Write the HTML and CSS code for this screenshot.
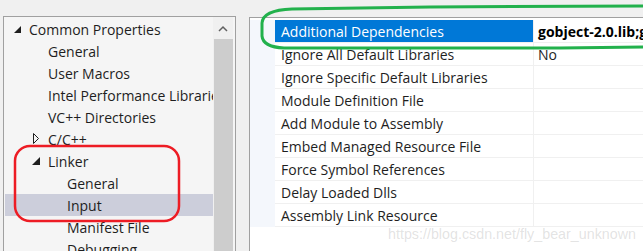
FILE: index.html
```html
<!DOCTYPE html>
<html lang="en">
<head>
    <meta charset="UTF-8">
    <meta name="viewport" content="width=device-width, initial-scale=1.0">
    <title>Linker Input - Property Pages</title>
    <link rel="stylesheet" href="styles.css">
</head>
<body>
    <div class="layout">
        <!-- Left: configuration tree -->
        <div class="tree-panel">
            <div class="tree">
                <div class="tree-row level-0">
                    <span class="twisty"><svg width="16" height="22"><polygon points="1,15 8,15 8,8" fill="#1e1e1e"/></svg></span>
                    <span class="label">Common Properties</span>
                </div>
                <div class="tree-row level-1"><span class="label">General</span></div>
                <div class="tree-row level-1"><span class="label">User Macros</span></div>
                <div class="tree-row level-1"><span class="label">Intel Performance Libraries</span></div>
                <div class="tree-row level-1"><span class="label">VC++ Directories</span></div>
                <div class="tree-row level-1 has-twisty">
                    <span class="twisty"><svg width="16" height="22"><polygon points="1.5,5.5 1.5,15.5 6.5,10.5" fill="none" stroke="#1e1e1e"/></svg></span>
                    <span class="label">C/C++</span>
                </div>
                <div class="tree-row level-1 has-twisty">
                    <span class="twisty"><svg width="16" height="22"><polygon points="0,15 8,15 8,7" fill="#1e1e1e"/></svg></span>
                    <span class="label">Linker</span>
                </div>
                <div class="tree-row level-2"><span class="label">General</span></div>
                <div class="tree-row level-2 selected"><span class="label">Input</span></div>
                <div class="tree-row level-2"><span class="label">Manifest File</span></div>
                <div class="tree-row level-2"><span class="label">Debugging</span></div>
            </div>
            <div class="scrollbar">
                <div class="scroll-arrow">
                    <svg width="20" height="22"><polyline points="6,14 10,10 14,14" fill="none" stroke="#606060" stroke-width="1.5"/></svg>
                </div>
                <div class="scroll-thumb"></div>
            </div>
        </div>

        <!-- Right: property grid -->
        <div class="grid-panel">
            <div class="prop-row selected">
                <div class="gutter"></div>
                <div class="prop-name">Additional Dependencies</div>
                <div class="prop-value bold">gobject-2.0.lib;glib-2.0.lib;%(AdditionalDependencies)</div>
            </div>
            <div class="prop-row">
                <div class="gutter"></div>
                <div class="prop-name">Ignore All Default Libraries</div>
                <div class="prop-value">No</div>
            </div>
            <div class="prop-row">
                <div class="gutter"></div>
                <div class="prop-name">Ignore Specific Default Libraries</div>
                <div class="prop-value"></div>
            </div>
            <div class="prop-row">
                <div class="gutter"></div>
                <div class="prop-name">Module Definition File</div>
                <div class="prop-value"></div>
            </div>
            <div class="prop-row">
                <div class="gutter"></div>
                <div class="prop-name">Add Module to Assembly</div>
                <div class="prop-value"></div>
            </div>
            <div class="prop-row">
                <div class="gutter"></div>
                <div class="prop-name">Embed Managed Resource File</div>
                <div class="prop-value"></div>
            </div>
            <div class="prop-row">
                <div class="gutter"></div>
                <div class="prop-name">Force Symbol References</div>
                <div class="prop-value"></div>
            </div>
            <div class="prop-row">
                <div class="gutter"></div>
                <div class="prop-name">Delay Loaded Dlls</div>
                <div class="prop-value"></div>
            </div>
            <div class="prop-row">
                <div class="gutter"></div>
                <div class="prop-name">Assembly Link Resource</div>
                <div class="prop-value"></div>
            </div>
        </div>
    </div>

    <!-- Hand-drawn annotations on top of the screenshot -->
    <svg class="marks" width="643" height="251">
        <path d="M 643,6 L 430,7 L 292,9 Q 263,10 262,23 L 262,36 Q 263,47 284,48 L 560,48 L 643,47" fill="none" stroke="#22b14c" stroke-width="3"/>
        <rect x="15" y="146" width="164" height="75" rx="15" ry="15" fill="none" stroke="#ed1c24" stroke-width="2.5"/>
    </svg>

    <div class="watermark">https://blog.csdn.net/fly_bear_unknown</div>
</body>
</html>
```

FILE: styles.css
```css
body {
    margin: 0;
    width: 643px;
    height: 251px;
    overflow: hidden;
    position: relative;
    background-color: #f0f0f0;
    font-family: "Open Sans", "Noto Sans", sans-serif;
    font-size: 14px;
    color: #1e1e1e;
}

.layout {
    display: flex;
    align-items: flex-start;
    height: 235px;
    padding: 16px 0 0 3px;
    overflow: hidden;
}

/* Tree */

.tree-panel {
    display: flex;
    flex-shrink: 0;
    width: 231px;
    height: 234px;
    border: 1px solid #a0a0a0;
    border-bottom: none;
    background-color: #f5f5f5;
    overflow: hidden;
}

.tree {
    width: 208px;
    flex-shrink: 0;
    padding: 1px 0 0 1px;
}

.tree-row {
    display: flex;
    align-items: center;
    height: 22px;
    white-space: nowrap;
    overflow: hidden;
}

.tree-row.level-0 {
    padding-left: 8px;
}

.tree-row.level-1 {
    padding-left: 43px;
}

.tree-row.level-1.has-twisty {
    padding-left: 27px;
}

.tree-row.level-2 {
    padding-left: 62px;
}

.tree-row.selected {
    background-color: #cccedb;
}

.twisty {
    display: flex;
    width: 16px;
    height: 22px;
    flex-shrink: 0;
}

.scrollbar {
    display: flex;
    flex-direction: column;
    flex-shrink: 0;
    width: 20px;
    margin-right: 2px;
    background-color: #f0f0f0;
}

.scroll-arrow {
    height: 22px;
}

.scroll-thumb {
    flex-grow: 1;
    margin-left: 1px;
    background-color: #cdcdcd;
}

/* Property grid */

.grid-panel {
    flex-shrink: 0;
    width: 393px;
    height: 231px;
    margin: 1px 0 0 13px;
    padding-top: 2px;
    border-top: 1px solid #a0a0a0;
    border-left: 1px solid #a0a0a0;
    background-color: #ffffff;
    overflow: hidden;
}

.prop-row {
    display: flex;
    height: 23px;
}

.gutter {
    width: 25px;
    flex-shrink: 0;
    background-color: #f4f7fc;
}

.prop-name,
.prop-value {
    display: flex;
    align-items: center;
    border-bottom: 1px solid #f0f0f0;
    white-space: nowrap;
    overflow: hidden;
}

.prop-name {
    width: 252px;
    flex-shrink: 0;
    padding-left: 6px;
}

.prop-value {
    flex-grow: 1;
    min-width: 0;
    padding-left: 4px;
    border-left: 1px solid #f0f0f0;
}

.prop-row.selected .prop-name {
    background-color: #0078d7;
    color: #ffffff;
}

.bold {
    font-weight: bold;
    color: #000000;
}

/* Overlays */

.marks {
    position: absolute;
    left: 0;
    top: 0;
    pointer-events: none;
}

.watermark {
    position: absolute;
    left: 388px;
    top: 226px;
    font-family: "Liberation Sans", Arial, sans-serif;
    font-size: 14.3px;
    color: rgba(160, 160, 160, 0.3);
    white-space: nowrap;
}
```
